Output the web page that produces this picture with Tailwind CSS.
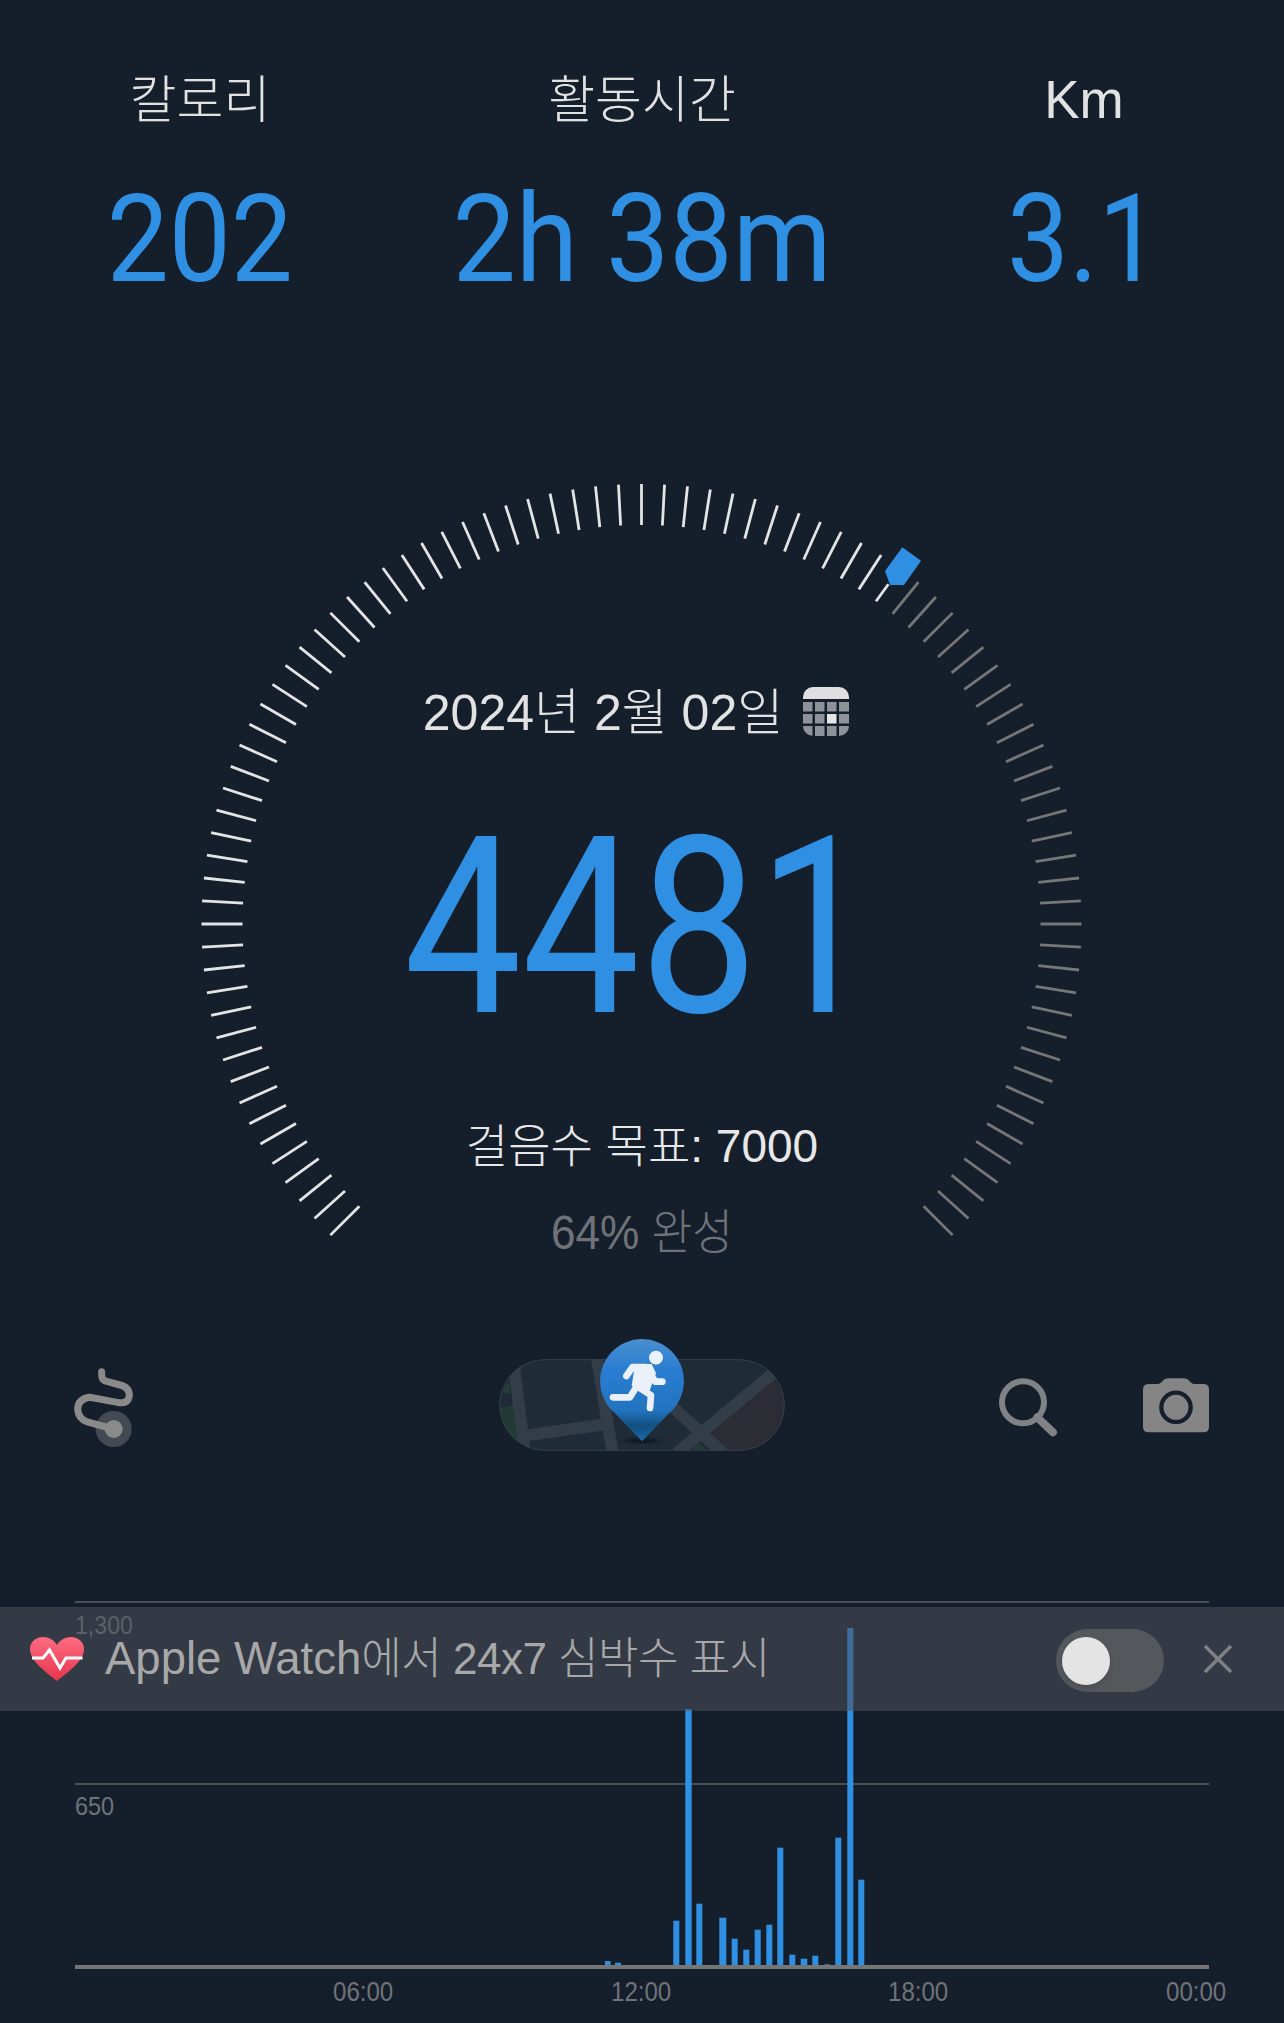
<!DOCTYPE html>
<html lang="ko">
<head>
  <meta charset="UTF-8">
  <title>걸음수</title>
  <script src="https://cdn.jsdelivr.net/npm/@tailwindcss/browser@4"></script>
</head>
<body class="bg-[#151f2b] overflow-hidden font-['Liberation_Sans','Noto_Sans_CJK_KR',sans-serif]">
<div class="w-[1284px] h-[2023px] flex flex-col">

  <!-- stats -->
  <section class="h-[340px] flex justify-center">
    <div class="w-[442px] shrink-0 flex flex-col items-center">
      <div class="mt-[71px] h-[60px] leading-[60px] text-[51px] font-light text-[#e2e2e2]">칼로리</div>
      <div class="mt-[49px] text-[122px] leading-[120px] text-[#2f8fe2] font-['Roboto'] scale-x-[0.905]">202</div>
    </div>
    <div class="w-[442px] shrink-0 flex flex-col items-center">
      <div class="mt-[71px] h-[60px] leading-[60px] text-[51px] font-light text-[#e2e2e2]">활동시간</div>
      <div class="mt-[49px] text-[122px] leading-[120px] text-[#2f8fe2] font-['Roboto'] scale-x-[0.925] whitespace-nowrap">2h 38m</div>
    </div>
    <div class="w-[442px] shrink-0 flex flex-col items-center">
      <div class="mt-[70px] h-[60px] leading-[60px] text-[53px] font-light text-[#e2e2e2]">Km</div>
      <div class="mt-[50px] text-[122px] leading-[120px] text-[#2f8fe2] font-['Roboto'] scale-x-[0.905]">3.1</div>
    </div>
  </section>

  <!-- gauge -->
  <section class="relative h-[980px] flex flex-col items-center">
    <svg id="gauge" class="absolute left-0 top-0" width="1284" height="980" viewBox="0 340 1284 980">
      <polygon points="902.3,547.3 921,560.7 904,585 890,585 885,571" fill="#2f8fe2"/>
    </svg>
    <div class="relative mt-[338px] mr-[12px] flex items-center h-[70px]">
      <span class="text-[50px] leading-[70px] text-[#e2e2e2] font-light">2024년 2월 02일</span>
      <svg class="ml-[20px] mb-[4px]" width="46" height="49" viewBox="0 0 46 49">
        <defs><clipPath id="cal"><rect width="46" height="49" rx="10"/></clipPath></defs>
        <g clip-path="url(#cal)">
          <rect width="46" height="12" fill="#dfdfe1"/>
          <g fill="#8f9298">
            <rect x="0" y="15" width="9.500" height="9.500"/><rect x="12" y="15" width="9.500" height="9.500"/><rect x="24" y="15" width="9.500" height="9.500"/><rect x="36" y="15" width="10" height="9.500"/>
            <rect x="0" y="27" width="9.500" height="9.500"/><rect x="12" y="27" width="9.500" height="9.500"/><rect x="36" y="27" width="10" height="9.500"/>
            <rect x="0" y="39" width="9.500" height="10"/><rect x="12" y="39" width="9.500" height="10"/><rect x="24" y="39" width="9.500" height="10"/><rect x="36" y="39" width="10" height="10"/>
          </g>
          <rect x="24" y="27" width="9.500" height="9.500" fill="#e6e6e6"/>
        </g>
      </svg>
    </div>
    <div class="relative mt-[35px] mr-[5px] text-[247px] leading-[290px] text-[#2f8fe2] font-['Roboto'] scale-x-[0.85]">4481</div>
    <div class="relative mt-[43px] text-[46px] leading-[60px] font-light text-[#e8e8e8]">걸음수 목표: 7000</div>
    <div class="relative mt-[27px] text-[48px] leading-[60px] font-light text-[#6f7379] scale-x-[0.92]">64% 완성</div>
  </section>

  <!-- actions -->
  <section class="flex items-start pl-[40px] h-[281px]">
    <svg width="400" height="160" viewBox="0 0 1200 480">
      <circle cx="221" cy="327" r="54" fill="#434a53"/>
      <path d="M185 155 V165 Q185 182 203 185 L240 195 Q268 202 268 226 Q266 252 236 248 L150 232 Q114 236 113 268 Q115 297 142 306 L220 327" fill="none" stroke="#8a8a8a" stroke-width="21" stroke-linecap="round"/>
      <circle cx="221" cy="327" r="27" fill="#8a8a8a"/>
    </svg>
    <svg class="ml-[40px]" width="320" height="160" viewBox="0 0 960 480">
      <defs>
        <clipPath id="pill"><rect x="58" y="118" width="856" height="274" rx="137"/></clipPath>
        <linearGradient id="pin" x1="0" y1="0" x2="0" y2="1">
          <stop offset="0" stop-color="#4a8fcf"/>
          <stop offset="0.3" stop-color="#2a7dd2"/>
          <stop offset="0.7" stop-color="#2273bf"/>
          <stop offset="0.85" stop-color="#12507f"/>
          <stop offset="1" stop-color="#1b69ae"/>
        </linearGradient>
        <radialGradient id="shadow"><stop offset="0" stop-color="#0a1420" stop-opacity="0.9"/><stop offset="1" stop-color="#0a1420" stop-opacity="0"/></radialGradient>
      </defs>
      <g clip-path="url(#pill)">
        <rect x="58" y="118" width="856" height="274" fill="#1f2b37"/>
        <polygon points="690,342 880,178 914,230 914,392 732,392" fill="#2b2c34"/>
        <polygon points="78,190 90,190 88,222 68,220" fill="#243d36"/>
        <polygon points="58,262 102,255 115,362 80,350 58,330" fill="#223a35"/>
        <polygon points="638,388 655,368 678,390" fill="#243d36"/>
        <g fill="none" stroke="#333d48" stroke-width="36">
          <path d="M98 110 L135 400"/>
          <path d="M115 350 L380 312"/>
          <path d="M350 110 L398 400"/>
          <path d="M560 245 L730 400"/>
          <path d="M590 400 L885 155"/>
        </g>
      </g>
      <rect x="59" y="119" width="854" height="272" rx="136" fill="none" stroke="#363f49" stroke-width="3"/>
      <ellipse cx="485" cy="362" rx="75" ry="14" fill="url(#shadow)"/>
      <path d="M486 364 L402 277 A126 126 0 1 1 570 277 Z" fill="url(#pin)"/>
      <circle cx="528" cy="113" r="21" fill="#eaf1fb"/>
      <g fill="none" stroke="#eaf1fb" stroke-width="20" stroke-linecap="round" stroke-linejoin="round">
        <path d="M439 168 L458 141 H497"/>
        <path d="M508 156 L526 185 H547"/>
        <path d="M399 232 H450 L472 196"/>
        <path d="M478 203 L513 226 L510 264"/>
      </g>
      <polygon points="465,132 515,132 528,160 505,222 455,198" fill="#eaf1fb"/>
    </svg>
    <svg class="ml-[160px] mt-[30px]" width="280" height="110" viewBox="0 0 840 330">
      <circle cx="189" cy="157" r="63" fill="none" stroke="#808285" stroke-width="18"/>
      <path d="M232 202 L279 247" stroke="#808285" stroke-width="24" stroke-linecap="round"/>
      <path d="M568 102 H592 Q600 102 606 95 Q614 85 625 85 H670 Q682 85 690 95 Q696 102 704 102 H730 Q747 102 747 118 V230 Q747 247 730 247 H566 Q549 247 549 230 V118 Q549 102 568 102 Z" fill="#858585"/>
      <circle cx="648" cy="172" r="44" fill="none" stroke="#151f2b" stroke-width="13"/>
    </svg>
  </section>

  <!-- chart -->
  <section class="relative flex-1">
    <div class="ml-[75px] w-[1134px] h-[2px] bg-[#4a4f56]"></div>
    <div class="ml-[75px] mt-[13px] text-[26px] leading-[18px] text-[#6f7379] origin-left scale-x-[0.89]">1,300</div>
    <div class="ml-[75px] mt-[149px] w-[1134px] h-[2px] bg-[#4a4f56]"></div>
    <div class="ml-[75px] mt-[12px] text-[26px] leading-[18px] text-[#6f7379] origin-left scale-x-[0.9]">650</div>

    <svg id="bars" class="absolute left-0 top-0" width="1284" height="422" viewBox="0 1601 1284 422"></svg>

    <div class="absolute left-[75px] top-[364px] w-[1134px] h-[4px] bg-[#757575]"></div>
    <div class="absolute left-0 top-[377px] w-[1284px] h-[28px] text-[28px] leading-[28px] text-[#6f7379]">
      <span class="absolute left-[333px] origin-left scale-x-[0.86]">06:00</span>
      <span class="absolute left-[611px] origin-left scale-x-[0.86]">12:00</span>
      <span class="absolute left-[888px] origin-left scale-x-[0.86]">18:00</span>
      <span class="absolute left-[1166px] origin-left scale-x-[0.86]">00:00</span>
    </div>

    <!-- banner over the chart -->
    <div class="absolute left-0 top-[6px] w-[1284px] h-[104px] bg-[#4d505b]/55 flex items-center pl-[30px]">
      <svg width="54" height="44" viewBox="0 0 54 44">
        <defs><linearGradient id="heart" x1="0" y1="0" x2="0" y2="1"><stop offset="0" stop-color="#ff6b82"/><stop offset="1" stop-color="#e5364c"/></linearGradient></defs>
        <path d="M27 44 C16 35 0 24 0 12 C0 4 7 0 13 0 C19 0 24 3 27 8 C30 3 35 0 41 0 C47 0 54 4 54 12 C54 24 38 35 27 44 Z" fill="url(#heart)"/>
        <path d="M2 21 H13 L19.500 13 L30 31 L36 21 H52.500" fill="none" stroke="#fff" stroke-width="3"/>
      </svg>
      <span class="ml-[21px] text-[44px] leading-[44px] font-light text-[#a8a8a8] whitespace-nowrap tracking-[-0.5px]"><span class="inline-block text-[45.5px] leading-[44px] tracking-normal">Apple Watch</span>에서 24x7 심박수 표시</span>
      <div class="ml-auto mt-[3px] w-[108px] h-[63px] rounded-full bg-[#54575c] flex items-center pl-[6px]">
        <div class="w-[48px] h-[48px] rounded-full bg-[#e4e4e4] shadow-md"></div>
      </div>
      <svg class="ml-[40px] mr-[52px]" width="28" height="28" viewBox="0 0 28 28">
        <path d="M1 1 L27 27 M27 1 L1 27" stroke="#7e8084" stroke-width="3.500"/>
      </svg>
    </div>
  </section>
</div>

<script>
  // ticks: 91 marks over 270 degrees, white up to the current value
  const gauge = document.getElementById('gauge');
  const cx = 641.5, cy = 924, r1 = 399, r2 = 440;
  for (let i = 0; i <= 90; i++) {
    const a = (-135 + i * 3) * Math.PI / 180;
    const line = document.createElementNS('http://www.w3.org/2000/svg', 'line');
    const sin = Math.sin(a), cos = Math.cos(a);
    let outer = r2;
    if (i === 57) outer = r2 - 20;
    line.setAttribute('x1', cx + r1 * sin);
    line.setAttribute('y1', cy - r1 * cos);
    line.setAttribute('x2', cx + outer * sin);
    line.setAttribute('y2', cy - outer * cos);
    line.setAttribute('stroke', i <= 57 ? '#e4e4e4' : '#767676');
    line.setAttribute('stroke-width', '2.8');
    gauge.insertBefore(line, gauge.firstChild);
  }

  // bars: [left, width, top]
  const data = [
    [605, 5.5, 1961], [615, 6, 1962.7], [673.3, 6, 1920.7], [685.3, 6.4, 1709], [696.3, 6, 1903.7],
    [719.3, 7, 1917.7], [731.7, 6, 1938.7], [743.3, 6, 1949.7], [754.7, 6, 1929.7], [766.3, 6, 1924.7],
    [777.3, 6, 1847.7], [789.3, 6, 1954.7], [800.7, 6.6, 1958.7], [812.3, 6, 1955.7], [824.3, 6, 1964.3],
    [835.3, 6, 1837.7], [847.3, 6, 1628], [858.3, 6, 1879.7]
  ];
  const bars = document.getElementById('bars');
  data.forEach(([x, w, top]) => {
    const rect = document.createElementNS('http://www.w3.org/2000/svg', 'rect');
    rect.setAttribute('x', x);
    rect.setAttribute('y', top);
    rect.setAttribute('width', w);
    rect.setAttribute('height', 1967 - top);
    rect.setAttribute('fill', '#2f8fe2');
    bars.appendChild(rect);
  });
</script>
</body>
</html>
